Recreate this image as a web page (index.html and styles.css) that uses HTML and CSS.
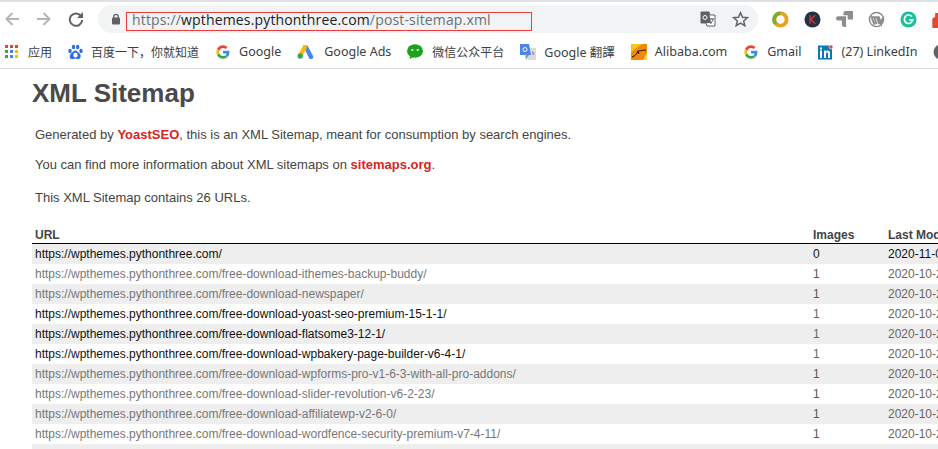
FILE: index.html
```
<!DOCTYPE html>
<html lang="en">
<head>
<meta charset="utf-8">
<title>XML Sitemap</title>
<link rel="stylesheet" href="styles.css">
</head>
<body>
<header class="chrome">
  <div class="toolbar">
    <svg class="nav" width="16" height="16" viewBox="0 0 16 16"><path d="M15 8H3M8.500 2L2.500 8l6 6" fill="none" stroke="#b4b6b8" stroke-width="2"/></svg>
    <svg class="nav forward" width="16" height="16" viewBox="0 0 16 16"><path d="M1 8h12M7.500 2l6 6-6 6" fill="none" stroke="#b4b6b8" stroke-width="2"/></svg>
    <svg class="nav reload" width="16" height="16" viewBox="0 0 16 16"><path d="M13.200 5.200A6.200 6.200 0 1 0 14.200 9" fill="none" stroke="#5f6368" stroke-width="2"/><path d="M15 1v6H9z" fill="#5f6368"/></svg>
    <div class="omnibox">
      <svg class="lock" width="10" height="12" viewBox="0 0 10 12"><path d="M2.800 5V3.500a2.200 2.200 0 0 1 4.400 0V5" fill="none" stroke="#5f6368" stroke-width="1.300"/><rect y="4.500" width="8" height="7" x="1" rx="1" fill="#5f6368"/></svg>
      <span class="url"><span class="dim">https://</span>wpthemes.pythonthree.com<span class="dim">/post-sitemap.xml</span></span>
      <span class="redbox"></span>
      <svg class="translate" width="16" height="16" viewBox="0 0 16 16"><path d="M1 1h8l1 3h5v11H7l-1-3H1z" fill="#fff" stroke="#5f6368" stroke-width="1"/><path d="M1 1h8l2 11H1z" fill="#5f6368"/><circle cx="5" cy="6.500" r="2" fill="none" stroke="#fff"/><path d="M10 8h4M12 7v1M10.500 13l3-5" stroke="#5f6368" fill="none"/></svg>
      <svg class="star" width="17" height="16" viewBox="0 0 17 16"><path d="M8.500 1.700l2 4.500 4.900.5-3.700 3.200 1.100 4.800-4.300-2.500-4.300 2.500 1.100-4.800L1.600 6.700l4.900-.5z" fill="none" stroke="#5f6368" stroke-width="1.500"/></svg>
    </div>
    <div class="extensions">
      <svg width="17" height="17" viewBox="0 0 18 18"><circle cx="9" cy="9" r="6.500" fill="none" stroke="#e8a221" stroke-width="4"/><path d="M4 13.500A6.500 6.500 0 0 1 9 2.500" fill="none" stroke="#7fae2e" stroke-width="4"/></svg>
      <svg width="17" height="17" viewBox="0 0 18 18"><circle cx="9" cy="9" r="8.500" fill="#253243"/><path d="M6.500 4.500v9M12 4.500L7 9l5 4.500" fill="none" stroke="#c0413b" stroke-width="1.500"/></svg>
      <svg width="17" height="17" viewBox="0 0 16 16"><path d="M7 2a2 2 0 0 1 2-2h7v8h-5V4H7zM0 7a2 2 0 0 1 2-2h7.500v10h-2a2 2 0 0 1-2-2V9H2a2 2 0 0 1-2-2z" fill="#8d8d8d"/></svg>
      <svg width="17" height="17" viewBox="0 0 18 18"><circle cx="9" cy="9" r="7.500" fill="#fff" stroke="#8a8a8a" stroke-width="1.500"/><path d="M3 6.500h3.500L9 14M7 6.500h4.500l2.500 7 1.500-6M4 7.500l3 7M9.500 7l2.500 7" fill="none" stroke="#8a8a8a" stroke-width="2"/></svg>
      <svg width="17" height="17" viewBox="0 0 18 18"><circle cx="9" cy="9" r="8.500" fill="#15c39a"/><path d="M12.500 5.800A4.500 4.500 0 1 0 13.500 9.500H9.800" fill="none" stroke="#fff" stroke-width="1.800"/></svg>
      <svg width="12" height="17" viewBox="0 0 12 18"><path d="M3 2h4l-1 4h6v12H0V8l3-2z" fill="#e8452c"/></svg>
    </div>
  </div>
  <nav class="bookmarks">
    <a class="mark cjk"><svg class="apps" width="14" height="14" viewBox="0 0 14 14"><g fill="#ea4335"><rect width="3" height="3"/><rect x="5" width="3" height="3"/><rect x="10" width="3" height="3"/></g><g fill="#34a853"><rect y="5" width="3" height="3"/><rect y="10" width="3" height="3"/></g><g fill="#4285f4"><rect x="5" y="5" width="3" height="3"/><rect x="5" y="10" width="3" height="3"/></g><g fill="#fbbc05"><rect x="10" y="5" width="3" height="3"/><rect x="10" y="10" width="3" height="3"/></g></svg><span>应用</span></a>
    <a class="mark cjk tight"><svg width="15" height="16" viewBox="0 0 15 16"><g fill="#2f6fe0"><ellipse cx="2" cy="7" rx="1.700" ry="2.200"/><ellipse cx="5.500" cy="3" rx="1.700" ry="2.300"/><ellipse cx="9.700" cy="3" rx="1.700" ry="2.300"/><ellipse cx="13" cy="7" rx="1.700" ry="2.200"/><path d="M7.500 6.500c2 0 2.500 2 4 3s2 5-1 5.500-2-.5-3-.5-1.500 1-4 .5-2-4-.5-5.500 2.500-3 4.500-3z"/></g><ellipse cx="7.500" cy="11" rx="2.200" ry="2.500" fill="#fff"/></svg><span>百度一下，你就知道</span></a>
    <a class="mark nudge"><svg class="g" width="14" height="14" viewBox="0 0 48 48"><path fill="#4285f4" d="M46 24.500c0-1.600-.1-3.100-.4-4.500H24v9h12.400c-.5 2.900-2.200 5.300-4.600 6.900l7.100 5.500C43.100 37.500 46 31.600 46 24.500z"/><path fill="#34a853" d="M24 47c6.200 0 11.400-2.100 15-5.600l-7.100-5.500c-2 1.300-4.600 2.100-7.900 2.100-6 0-11.100-4-12.900-9.500l-7.400 5.700C7.400 41.600 15.100 47 24 47z"/><path fill="#fbbc05" d="M11.100 28.500c-.5-1.400-.7-2.900-.7-4.500s.3-3.100.7-4.500l-7.400-5.700C2.200 16.800 1.300 20.300 1.300 24s.9 7.200 2.400 10.200z"/><path fill="#ea4335" d="M24 10c3.400 0 6.400 1.200 8.800 3.400l6.300-6.300C35.400 3.400 30.200 1 24 1 15.100 1 7.400 6.400 3.700 13.800l7.400 5.700C12.900 14 18 10 24 10z"/></svg><span>Google</span></a>
    <a class="mark wide"><svg width="17" height="15" viewBox="0 0 17 15"><path d="M6 1.500l4.500 0L16 12a2.200 2.200 0 0 1-4 2z" fill="#4285f4"/><path d="M6 1.500a2.500 2.500 0 0 1 4 2L5.500 12 1.800 10z" fill="#fbbc05"/><circle cx="3.200" cy="12" r="2.700" fill="#34a853"/></svg><span>Google Ads</span></a>
    <a class="mark cjk"><svg width="16" height="15" viewBox="0 0 16 15"><ellipse cx="8" cy="7" rx="8" ry="6.800" fill="#1aa31a"/><path d="M3 12l-.5 3 4-2z" fill="#1aa31a"/><circle cx="5.300" cy="6" r="1.100" fill="#fff"/><circle cx="10.700" cy="6" r="1.100" fill="#fff"/></svg><span>微信公众平台</span></a>
    <a class="mark tight"><svg width="16" height="16" viewBox="0 0 16 16"><path d="M7 4h9v12H8z" fill="#d8dadc"/><path d="M0 0h9l2 11H0z" fill="#4a85ec"/><path d="M5 10l1 6 3-5z" fill="#8a9bb5"/><circle cx="5" cy="5.500" r="2" fill="none" stroke="#fff"/><path d="M12 7l1 1.500 1.500.2-1 1 .3 1.500-1.300-.7" fill="#7a7f85"/></svg><span>Google 翻譯</span></a>
    <a class="mark tight"><svg width="16" height="16" viewBox="0 0 16 16"><rect width="16" height="16" fill="#f08a0c"/><path d="M0 0h11L0 8z" fill="#f9c713"/><path d="M0 16h12L16 9v7z" fill="#f6e12a"/><path d="M1 13c3-1 5-3 6-6 2 0 5-1 8-1M7 7l1 3" fill="none" stroke="#1c1405" stroke-width="1"/></svg><span>Alibaba.com</span></a>
    <a class="mark nudge"><svg class="g" width="14" height="14" viewBox="0 0 48 48"><path fill="#4285f4" d="M46 24.500c0-1.600-.1-3.100-.4-4.500H24v9h12.400c-.5 2.900-2.200 5.300-4.600 6.900l7.100 5.500C43.100 37.500 46 31.600 46 24.500z"/><path fill="#34a853" d="M24 47c6.200 0 11.400-2.100 15-5.600l-7.100-5.500c-2 1.300-4.600 2.100-7.900 2.100-6 0-11.100-4-12.900-9.500l-7.400 5.700C7.400 41.600 15.100 47 24 47z"/><path fill="#fbbc05" d="M11.100 28.500c-.5-1.400-.7-2.900-.7-4.500s.3-3.100.7-4.500l-7.400-5.700C2.200 16.800 1.300 20.300 1.300 24s.9 7.200 2.400 10.200z"/><path fill="#ea4335" d="M24 10c3.400 0 6.400 1.200 8.800 3.400l6.300-6.300C35.400 3.400 30.200 1 24 1 15.100 1 7.400 6.400 3.700 13.800l7.400 5.700C12.900 14 18 10 24 10z"/></svg><span>Gmail</span></a>
    <a class="mark tight"><svg width="16" height="16" viewBox="0 0 16 16"><rect y="1.500" width="14" height="14" fill="#0a76b4"/><circle cx="13" cy="3" r="2" fill="#e8452c" stroke="#fff" stroke-width=".6"/><path d="M2 6.500h2V14H2zM2 3.500h2v2H2zM6 6.500h2v1c1-1.500 4-1.500 4 1.500v5h-2v-4c0-2-2-2-2 0v4H6z" fill="#fff"/></svg><span>(27) LinkedIn</span></a>
    <a class="mark"><svg width="16" height="16" viewBox="0 0 16 16"><circle cx="8" cy="8" r="7.500" fill="#5f6368"/><path d="M6 4h6v3H6z" fill="#fff"/></svg></a>
  </nav>
</header>
<main class="content">
  <h1>XML Sitemap</h1>
  <p class="intro first">Generated by <a>YoastSEO</a>, this is an XML Sitemap, meant for consumption by search engines.</p>
  <p class="intro second">You can find more information about XML sitemaps on <a>sitemaps.org</a>.</p>
  <p class="intro third">This XML Sitemap contains 26 URLs.</p>
  <table>
    <thead><tr><th class="c-url">URL</th><th class="c-img">Images</th><th class="c-mod">Last Mod.</th></tr></thead>
    <tbody>
      <tr class="black"><td>https://wpthemes.pythonthree.com/</td><td>0</td><td>2020-11-02 08:14 +00:00</td></tr>
      <tr><td>https://wpthemes.pythonthree.com/free-download-ithemes-backup-buddy/</td><td>1</td><td>2020-10-29 08:14 +00:00</td></tr>
      <tr><td>https://wpthemes.pythonthree.com/free-download-newspaper/</td><td>1</td><td>2020-10-29 08:14 +00:00</td></tr>
      <tr class="black"><td>https://wpthemes.pythonthree.com/free-download-yoast-seo-premium-15-1-1/</td><td>1</td><td>2020-10-29 08:14 +00:00</td></tr>
      <tr class="black"><td>https://wpthemes.pythonthree.com/free-download-flatsome3-12-1/</td><td>1</td><td>2020-10-29 08:14 +00:00</td></tr>
      <tr class="black"><td>https://wpthemes.pythonthree.com/free-download-wpbakery-page-builder-v6-4-1/</td><td>1</td><td>2020-10-29 08:14 +00:00</td></tr>
      <tr><td>https://wpthemes.pythonthree.com/free-download-wpforms-pro-v1-6-3-with-all-pro-addons/</td><td>1</td><td>2020-10-29 08:14 +00:00</td></tr>
      <tr><td>https://wpthemes.pythonthree.com/free-download-slider-revolution-v6-2-23/</td><td>1</td><td>2020-10-29 08:14 +00:00</td></tr>
      <tr><td>https://wpthemes.pythonthree.com/free-download-affiliatewp-v2-6-0/</td><td>1</td><td>2020-10-29 08:14 +00:00</td></tr>
      <tr><td>https://wpthemes.pythonthree.com/free-download-wordfence-security-premium-v7-4-11/</td><td>1</td><td>2020-10-29 08:14 +00:00</td></tr>
      <tr><td>&nbsp;</td><td></td><td></td></tr>
    </tbody>
  </table>
</main>
</body>
</html>
```
FILE: styles.css
```
html, body { margin: 0; padding: 0; height: 449px; overflow: hidden; background: #fff; }
body { width: 938px; font-family: "Liberation Sans", Arial, sans-serif; }
.chrome { height: 69px; box-sizing: border-box; border-top: 2px solid #dfe1e5; border-bottom: 1px solid #d9d9d9; overflow: hidden; }
.toolbar { display: flex; align-items: center; height: 34px; padding-left: 4px; }
.toolbar .nav { margin-right: 16px; flex: none; }
.omnibox { position: relative; display: flex; align-items: center; width: 660px; height: 28px; border-radius: 14px; background: #f1f3f4; padding-left: 12px; box-sizing: border-box; flex: none; margin-left: -2px; }
.lock { flex: none; margin-left: 1px; }
.url { margin-left: 11px; font: 14px "Open Sans", "Noto Sans", sans-serif; color: #202124; white-space: nowrap; letter-spacing: .16px; }
.dim { color: #6b6f75; }
.redbox { position: absolute; left: 28px; top: 7px; width: 404px; height: 17px; border: 1px solid #f03a3a; }
.translate { position: absolute; left: 602px; top: 6px; }
.star { position: absolute; left: 634px; top: 6px; }
.extensions { display: flex; align-items: center; gap: 15px; margin-left: 14px; flex: none; }
.extensions svg { flex: none; }
.bookmarks { display: flex; align-items: center; height: 31px; padding: 0 0 1px 5px; gap: 16px; white-space: nowrap; }
.mark { display: flex; align-items: center; gap: 9px; font: 12.500px "Noto Sans", "Noto Sans CJK SC", sans-serif; color: #3c4043; flex: none; }
.mark svg { flex: none; }
.cjk { font-size: 12px; }
.tight { gap: 8px; }
.wide { gap: 10px; }
.nudge { margin-left: 1px; }
.content { padding-left: 32px; color: #444; }
h1 { margin: 0; padding-top: 8px; font-size: 26px; line-height: 32px; font-weight: 700; color: #4a4a4a; }
.intro { margin: 0; padding-left: 3px; font-size: 13px; line-height: 15px; color: #444; }
.intro a { font-weight: 700; color: #d9231c; }
.first { margin-top: 18px; }
.second { margin-top: 15px; }
.third { margin-top: 18px; }
table { margin-top: 21px; border-collapse: collapse; table-layout: fixed; width: 1120px; font-size: 12px; color: #777; }
th { height: 17px; padding: 0 3px; text-align: left; font-size: 12px; line-height: 14px; border-bottom: 1px solid #000; color: #444; }
.c-url { width: 772px; }
.c-img { width: 69px; }
td { height: 20px; padding: 0 3px; white-space: nowrap; overflow: hidden; }
tbody tr:nth-child(odd) { background: #eee; }
.black td { color: #111; }
tr td:nth-child(2) { color: #555; }
tr td:nth-child(3) { color: #666; }
.black td:nth-child(n+2) { color: #111; }
.black:not(:first-child) td:nth-child(n+2) { color: #666; }
```
